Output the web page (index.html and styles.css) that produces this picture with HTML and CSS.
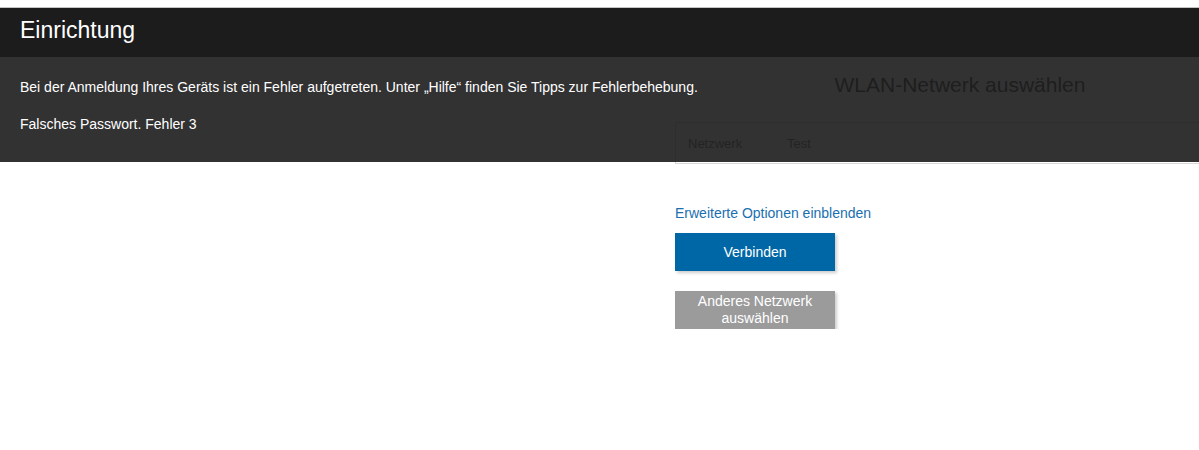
FILE: index.html
```html
<!DOCTYPE html>
<html lang="de">
<head>
    <meta charset="UTF-8">
    <meta name="viewport" content="width=device-width, initial-scale=1.0">
    <title>Einrichtung</title>
    <link rel="stylesheet" href="styles.css">
</head>
<body>
    <div class="topline"></div>

    <div class="header">
        <h1>Einrichtung</h1>
    </div>

    <div class="page">
        <div class="side"></div>

        <div class="wizard">
            <h2>WLAN-Netwerk auswählen</h2>

            <table class="network-table">
                <tr>
                    <td class="label">Netzwerk</td>
                    <td>Test</td>
                </tr>
            </table>

            <a class="advanced-link" href="#">Erweiterte Optionen einblenden</a>

            <button class="btn btn-primary">Verbinden</button>
            <button class="btn btn-secondary">Anderes Netzwerk auswählen</button>
        </div>

        <!-- Fehlermeldung liegt über dem Inhalt -->
        <div class="error-banner">
            <p>Bei der Anmeldung Ihres Geräts ist ein Fehler aufgetreten. Unter „Hilfe“ finden Sie Tipps zur Fehlerbehebung.</p>
            <p>Falsches Passwort. Fehler 3</p>
        </div>
    </div>
</body>
</html>
```

FILE: styles.css
```css
body {
    font-family: "Liberation Sans", Arial, sans-serif;
    margin: 0;
    background-color: white;
    overflow: hidden;
    color: #333;
}

.topline {
    height: 7px;
    background: white;
    border-bottom: 1px solid #c4c4c4;
}

.header {
    background: #1c1c1c;
    height: 49px;
    padding: 0 20px;
    display: flex;
    align-items: center;
}

.header h1 {
    margin: 0;
    margin-top: -4px;
    font-size: 23px;
    font-weight: normal;
    color: white;
}

.page {
    position: relative;
    display: flex;
}

.side {
    flex: 0 0 675px;
}

.wizard {
    flex: 0 0 570px;
    display: flex;
    flex-direction: column;
    align-items: flex-start;
}

.wizard h2 {
    align-self: stretch;
    margin: 16px 0 25px;
    font-size: 21px;
    line-height: 24px;
    font-weight: normal;
    text-align: center;
    color: #333;
}

.network-table {
    width: 570px;
    border-collapse: collapse;
    border: 1px solid #d8d8d8;
    font-size: 13px;
    color: #666;
}

.network-table td {
    height: 40px;
    padding: 0 12px;
}

.network-table td.label {
    width: 75px;
}

.advanced-link {
    margin-top: 40px;
    font-size: 14px;
    line-height: 18px;
    color: #1a6fb0;
    text-decoration: none;
}

.btn {
    width: 160px;
    height: 38px;
    border: none;
    font-family: inherit;
    font-size: 14px;
    line-height: 17px;
    color: white;
    cursor: pointer;
    box-shadow: 2px 2px 3px rgba(0,0,0,0.2);
}

.btn-primary {
    margin-top: 11px;
    background: #0067a6;
}

.btn-secondary {
    margin-top: 20px;
    background: #9b9b9b;
    padding: 0 14px;
}

.error-banner {
    position: absolute;
    top: 0;
    left: 0;
    right: 0;
    height: 105px;
    box-sizing: border-box;
    padding: 21px 20px 0;
    background: rgba(28,28,28,0.9);
    color: white;
    font-size: 14px;
    line-height: 18px;
}

.error-banner p {
    margin: 0 0 19px;
}
```
